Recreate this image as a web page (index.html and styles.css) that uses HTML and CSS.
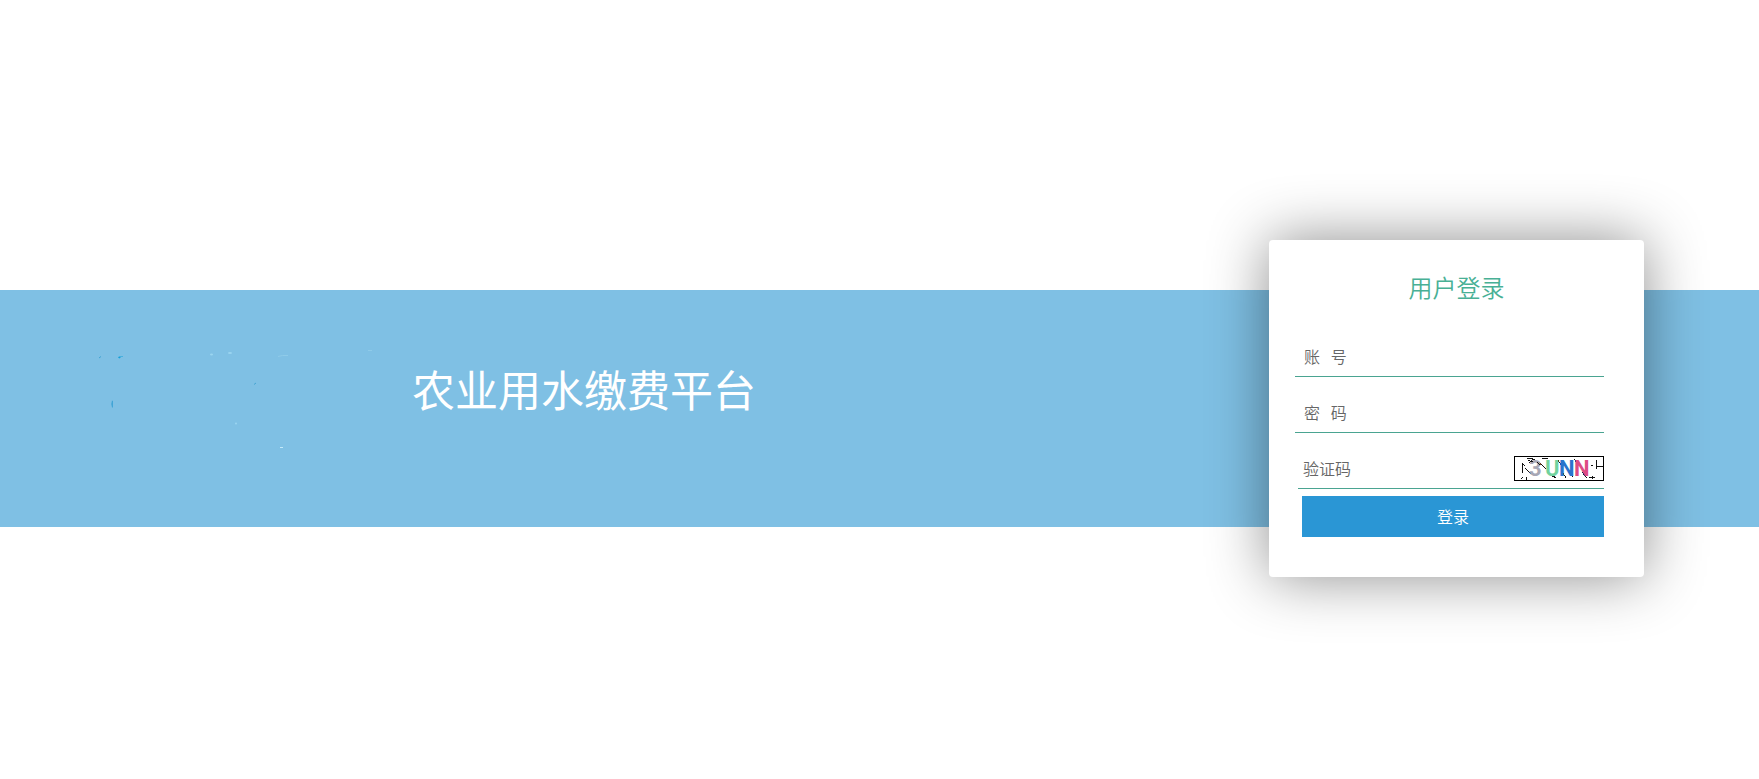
FILE: index.html
```html
<!DOCTYPE html>
<html lang="zh-CN">
<head>
  <meta charset="UTF-8">
  <meta name="viewport" content="width=device-width, initial-scale=1.0">
  <title>农业用水缴费平台</title>
  <link rel="stylesheet" href="styles.css">
</head>
<body>
  <main class="banner">
    <svg class="banner-logo" viewBox="0 0 412 237" aria-hidden="true">
      <path d="M118 67.500L119 66.500H123V67H121L119.500 68.500Z" fill="#149fd8"/>
      <path d="M99 68L101 66.500" stroke="#3fa3d2"/>
      <path d="M112 110.500Q110.500 114 112 117.500H113V111Z" fill="#42a5d6"/>
      <path d="M254 94.500L256 93" stroke="#46a4d2"/>
      <g fill="#9bd5f0">
        <ellipse cx="211.500" cy="64.500" rx="1.500" ry="1"/>
        <ellipse cx="230" cy="63" rx="2" ry="1"/>
        <ellipse cx="236" cy="133.500" rx="1" ry="1"/>
      </g>
      <path d="M278 66.500Q282 65 288 65.500M368 60.500H372" stroke="#8fcbe9" fill="none"/>
      <path d="M280 157.500H283" stroke="#c3eafa"/>
    </svg>
    <h1 class="banner-title">农业用水缴费平台</h1>

    <form class="login" action="#" method="post">
      <h2 class="login-title">用户登录</h2>
      <input class="login-input" type="text" name="username" placeholder="账   号" aria-label="账号">
      <input class="login-input" type="password" name="password" placeholder="密   码" aria-label="密码">
      <div class="captcha">
        <input class="captcha-input" type="text" name="captcha" placeholder="验证码" aria-label="验证码">
        <svg class="captcha-img" viewBox="0 0 90 25" role="img" aria-label="验证码图片">
          <rect x="0.500" y="0.500" width="89" height="24" fill="#fff" stroke="#000"/>
          <g class="captcha-lines">
            <path d="M8.500 7V17M9 8L11 10M11 12L15 16L18 18M13 3L17 2L21 4M15 7L19 3M14 4L18 6"/>
            <path d="M7 23L9 21M12.500 21V24M24 6L28 9L32 13M28 2L34 3M38 20L42 22M44 4L47 9"/>
            <path d="M47 14L49 17L52 22M55 16L59 21M60 3L64 8M68 16L73 22M75 21.500H81M78.500 23V20"/>
          </g>
          <g class="captcha-text">
            <text x="15" y="20" fill="#a7a7b5">3</text>
            <text x="31" y="20" fill="#70d29d">U</text>
            <text x="45" y="20" fill="#2a73cc">N</text>
            <text x="60" y="20" fill="#dd4b84">N</text>
          </g>
          <g class="captcha-lines">
            <path d="M16 6L19 5M23 6L26 9M40 20L42 22"/>
            <path d="M82.500 4V13M77 9.500H79M83 10.500H89"/>
          </g>
        </svg>
      </div>
      <button class="login-btn" type="submit">登录</button>
    </form>
  </main>
</body>
</html>
```

FILE: styles.css
```css
* {
  box-sizing: border-box;
}

body {
  margin: 0;
  padding-top: 38px;
  min-height: 100vh;
  display: flex;
  align-items: center;
  background: #fff;
  font-family: "Noto Sans CJK SC", sans-serif;
}

.banner {
  width: 100%;
  height: 237px;
  padding-right: 115px;
  display: flex;
  align-items: center;
  background: #7fc0e4;
}

.banner-logo {
  width: 412px;
  height: 237px;
  flex-shrink: 0;
}

.banner-title {
  margin: 0 0 42px;
  color: #fff;
  font-size: 43px;
  font-weight: 400;
  line-height: 60px;
  white-space: nowrap;
}

.login {
  width: 375px;
  margin-left: auto;
  padding: 30px 40px 40px 26px;
  flex-shrink: 0;
  display: flex;
  flex-direction: column;
  background: #fff;
  border-radius: 4px;
  box-shadow: 0 0 60px rgba(0, 0, 0, 0.45);
}

.login-title {
  margin: 0 0 33px;
  padding-left: 14px;
  color: #48b095;
  font-size: 24px;
  font-weight: 350;
  line-height: 34px;
  text-align: center;
}

.login-input,
.captcha-input {
  width: 100%;
  height: 40px;
  padding: 0 9px 2px;
  border: none;
  outline: none;
  background: transparent;
  color: #333;
  font-family: inherit;
  font-size: 16px;
  font-weight: 350;
}

.login-input {
  margin-bottom: 16px;
  border-bottom: 1px solid #4aa491;
}

.login-input::placeholder,
.captcha-input::placeholder {
  color: #666;
}

.captcha {
  height: 40px;
  margin-left: 3px;
  display: flex;
  align-items: center;
  border-bottom: 1px solid #4aa491;
}

.captcha-input {
  flex: 1;
  min-width: 0;
  height: 39px;
  padding: 0 5px 2px;
}

.captcha-img {
  width: 90px;
  height: 25px;
  flex-shrink: 0;
  overflow: visible;
}

.captcha-text {
  font-family: Roboto, sans-serif;
  font-size: 22px;
  font-weight: 700;
}

.captcha-lines {
  fill: none;
  stroke: #111;
  shape-rendering: crispEdges;
}

.login-btn {
  height: 41px;
  margin: 7px 0 0 7px;
  padding: 0 0 2px;
  border: none;
  background: #2a96d5;
  color: #fff;
  font-family: inherit;
  font-size: 16px;
  font-weight: 350;
  cursor: pointer;
}

.login-btn:hover {
  background: #2387c2;
}
```
